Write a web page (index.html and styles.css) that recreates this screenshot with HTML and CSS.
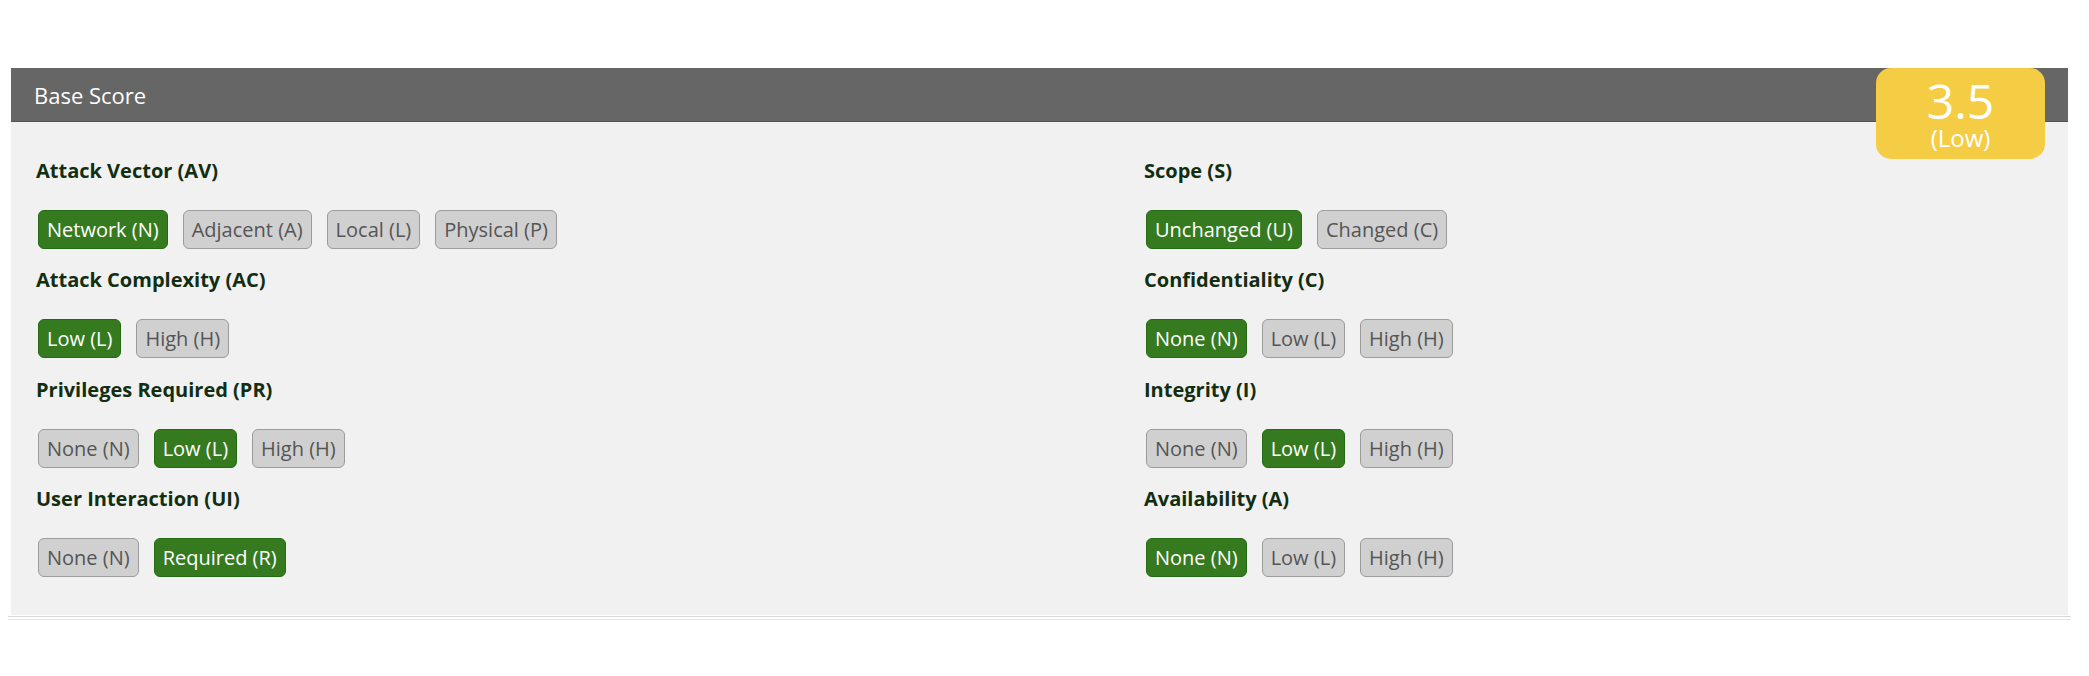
FILE: index.html
```html
<!DOCTYPE html>
<html lang="en">
<head>
<meta charset="utf-8">
<title>Base Score</title>
<link rel="stylesheet" href="styles.css">
</head>
<body>
<div class="page">
  <section class="panel">
    <header class="panel-head">Base Score</header>
    <div class="score-badge">
      <div class="score-value">3.5</div>
      <div class="score-rating">(Low)</div>
    </div>
    <div class="panel-body">
      <div class="column">
        <div class="metric">
          <div class="metric-label">Attack Vector (AV)</div>
          <div class="options">
            <span class="opt on">Network (N)</span>
            <span class="opt">Adjacent (A)</span>
            <span class="opt">Local (L)</span>
            <span class="opt">Physical (P)</span>
          </div>
        </div>
        <div class="metric">
          <div class="metric-label">Attack Complexity (AC)</div>
          <div class="options">
            <span class="opt on">Low (L)</span>
            <span class="opt">High (H)</span>
          </div>
        </div>
        <div class="metric">
          <div class="metric-label">Privileges Required (PR)</div>
          <div class="options">
            <span class="opt">None (N)</span>
            <span class="opt on">Low (L)</span>
            <span class="opt">High (H)</span>
          </div>
        </div>
        <div class="metric">
          <div class="metric-label">User Interaction (UI)</div>
          <div class="options">
            <span class="opt">None (N)</span>
            <span class="opt on">Required (R)</span>
          </div>
        </div>
      </div>
      <div class="column">
        <div class="metric">
          <div class="metric-label">Scope (S)</div>
          <div class="options">
            <span class="opt on">Unchanged (U)</span>
            <span class="opt">Changed (C)</span>
          </div>
        </div>
        <div class="metric">
          <div class="metric-label">Confidentiality (C)</div>
          <div class="options">
            <span class="opt on">None (N)</span>
            <span class="opt">Low (L)</span>
            <span class="opt">High (H)</span>
          </div>
        </div>
        <div class="metric">
          <div class="metric-label">Integrity (I)</div>
          <div class="options">
            <span class="opt">None (N)</span>
            <span class="opt on">Low (L)</span>
            <span class="opt">High (H)</span>
          </div>
        </div>
        <div class="metric">
          <div class="metric-label">Availability (A)</div>
          <div class="options">
            <span class="opt on">None (N)</span>
            <span class="opt">Low (L)</span>
            <span class="opt">High (H)</span>
          </div>
        </div>
      </div>
    </div>
  </section>
  <div class="rule"></div>
</div>
</body>
</html>
```

FILE: styles.css
```css
html, body {
  background: #ffffff;
}
body {
  margin: 8px;
  font-family: "Open Sans", "Noto Sans", sans-serif;
}
.page {
  margin: 60px 0 0 0;
  width: 2063px;
}
.panel {
  position: relative;
  margin: 0 3px;
  background: #f1f1f1;
}
.panel-head {
  height: 53px;
  line-height: 54px;
  background: #666666;
  border-bottom: 1px solid #555555;
  color: #ffffff;
  font-size: 22px;
  padding-left: 23px;
}
.score-badge {
  position: absolute;
  top: 0;
  right: 23px;
  width: 169px;
  height: 91px;
  box-sizing: border-box;
  padding-top: 9px;
  border-radius: 15px;
  background: #f5cd45;
  color: #ffffff;
  text-align: center;
}
.score-value {
  font-size: 48px;
  line-height: 48px;
}
.score-rating {
  font-size: 24px;
  line-height: 25px;
}
.panel-body {
  display: grid;
  grid-template-columns: 1108px 1fr;
  padding: 35px 0 38px 25px;
}
.metric {
  margin-bottom: 17.3px;
}
.metric:last-child {
  margin-bottom: 0;
}
.metric-label {
  font-size: 20px;
  line-height: 27px;
  font-weight: 700;
  color: #112e11;
  margin-bottom: 26px;
}
.options {
  display: flex;
  gap: 15px;
  margin-left: 2px;
}
.opt {
  display: block;
  font-size: 20px;
  line-height: 27px;
  padding: 5px 8px;
  border: 1px solid #9c9c9c;
  border-radius: 6px;
  background: #d0d0d0;
  color: #555555;
}
.opt.on {
  background: #357a1f;
  border-color: #236a12;
  color: #ffffff;
}
.rule {
  margin-top: 1px;
  height: 2px;
  border-top: 1px solid #d8d8d8;
  border-bottom: 1px solid #e3e3e3;
}
```
